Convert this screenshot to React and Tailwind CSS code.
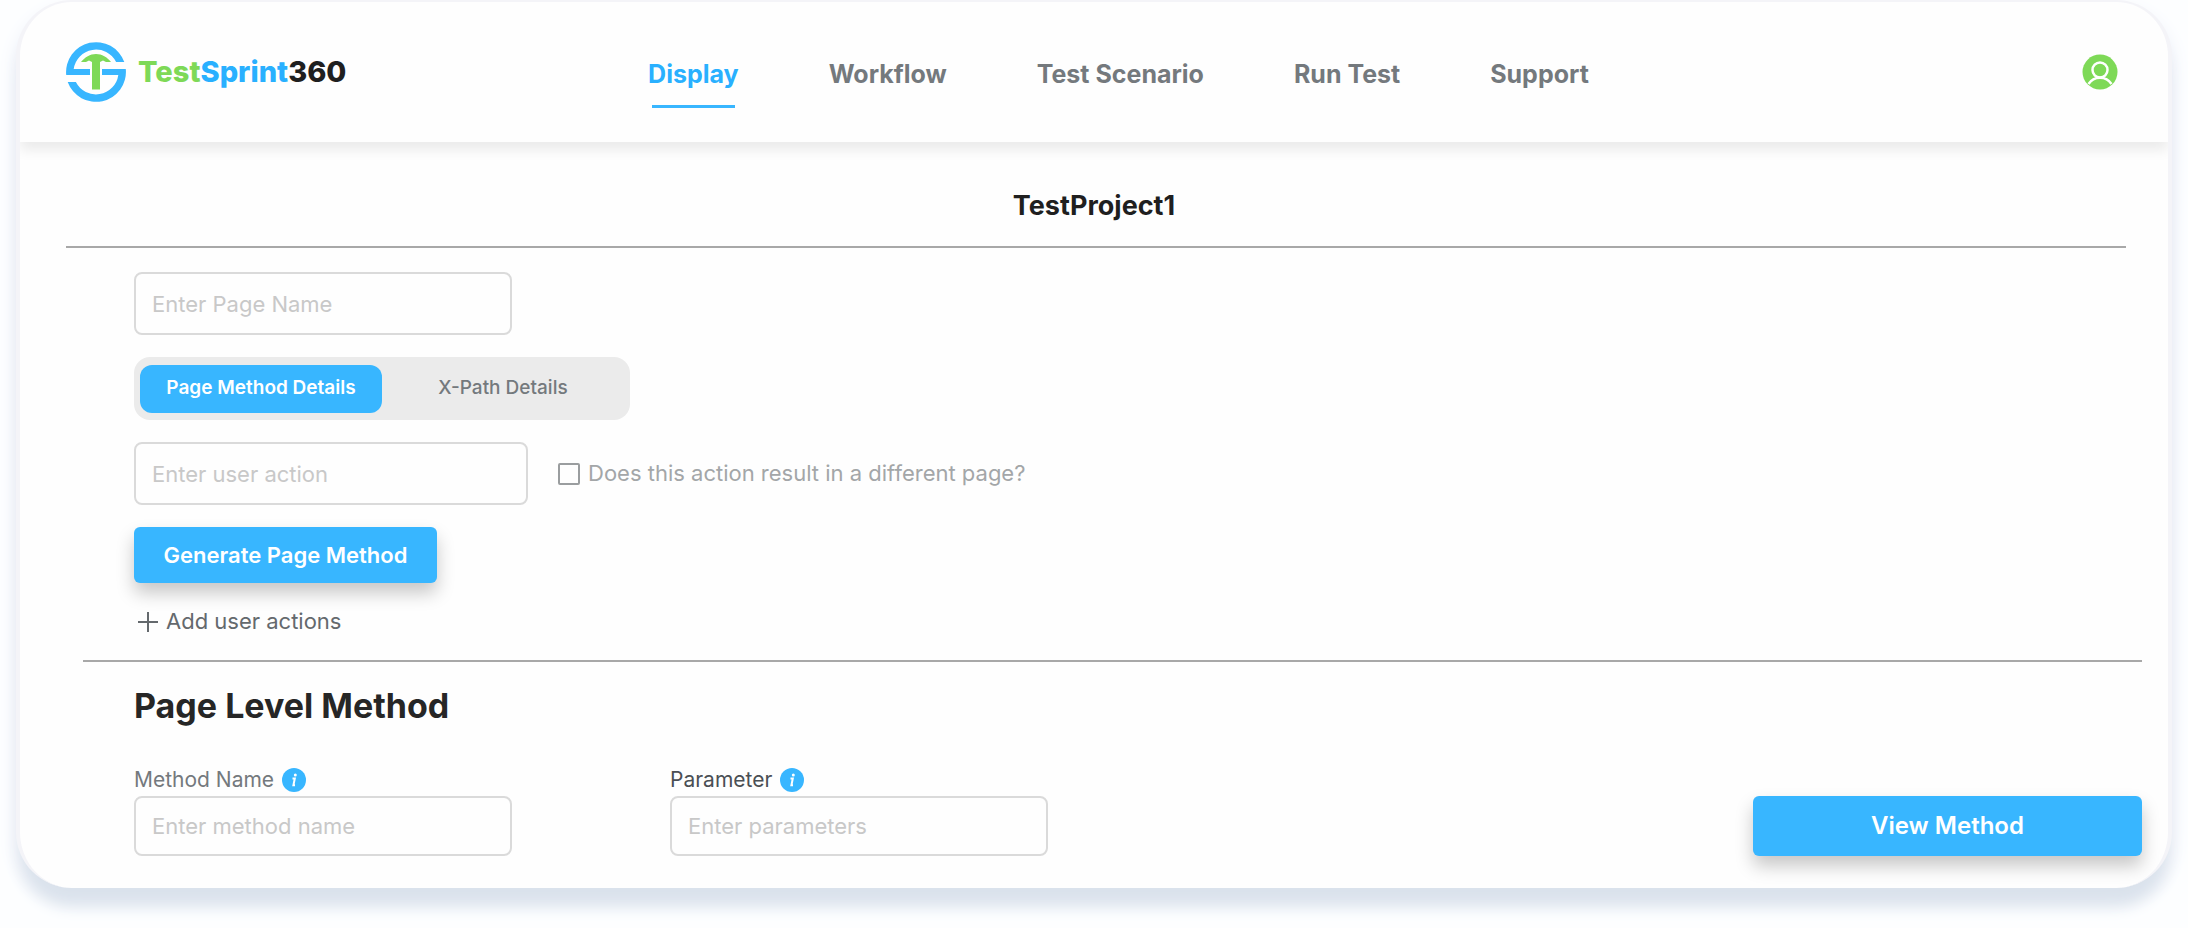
import { useState } from 'react'
import clsx from 'clsx'

const navItems = ['Display', 'Workflow', 'Test Scenario', 'Run Test', 'Support']
const tabs = ['Page Method Details', 'X-Path Details']

const inputStyles =
  'rounded-lg border-2 border-[#dadada] bg-transparent px-4 text-[22px] text-[#262626] outline-none placeholder:text-[#c8c8c8]'
const buttonStyles =
  'rounded-md bg-[#38b6ff] font-semibold text-white shadow-[0_10px_18px_rgba(0,0,0,0.22)]'

function Logo() {
  return (
    <a href="#" className="flex items-center gap-3">
      <svg viewBox="0 0 60 60" className="size-15" aria-hidden="true">
        <g fill="#38b6ff">
          <path d="M.2 33A30 30 0 0 1 58.3 20H50.1A22.5 22.5 0 0 0 7.7 27H24V33Z" />
          <path d="M59.8 27A30 30 0 0 1 1.7 40H9.9A22.5 22.5 0 0 0 52.3 33H36V27Z" />
        </g>
        <path
          fill="#7ed957"
          d="M15 20C19 15 24 12 30 12S41 15 45 20H40L37 18.5 34 20V47.5H26V20L23 18.5 20 20Z"
        />
      </svg>
      <span className="text-[29px] font-extrabold text-[#1f1f1f]">
        <span className="text-[#7ed957]">Test</span>
        <span className="text-[#29b0ff]">Sprint</span>360
      </span>
    </a>
  )
}

function UserIcon() {
  return (
    <svg viewBox="0 0 36 36" className="size-9" aria-hidden="true">
      <circle cx="18" cy="18" r="17.5" fill="#7ed957" />
      <g fill="none" stroke="#fff" strokeWidth="2.5">
        <circle cx="18" cy="16" r="7.5" />
        <path d="M6.5 30C9 26 13 23.7 18 23.7S27 26 29.5 30" />
      </g>
    </svg>
  )
}

function InfoIcon() {
  return (
    <svg viewBox="0 0 24 24" className="size-6" aria-hidden="true">
      <circle cx="12" cy="12" r="12" fill="#38b6ff" />
      <circle cx="13.3" cy="7" r="1.5" fill="#fff" />
      <path
        d="M10.5 10.5H12.8L11.4 17.2H13"
        fill="none"
        stroke="#fff"
        strokeWidth="2"
      />
    </svg>
  )
}

function Header() {
  return (
    <header className="grid h-35 grid-cols-[11fr_auto_10fr] items-center pr-[50px] pl-[46px] shadow-[0_8px_12px_rgba(0,0,0,0.08)]">
      <Logo />
      <nav className="flex gap-[90px] pt-1">
        {navItems.map((item, i) => (
          <a
            key={item}
            href="#"
            className={clsx(
              'relative text-[25px] leading-8 font-bold',
              i === 0 ? 'text-[#29b0ff]' : 'text-[#74797d]'
            )}
          >
            {item}
            {i === 0 && (
              <span className="absolute inset-x-1 -bottom-[18px] h-[3px] bg-[#38b6ff]" />
            )}
          </a>
        ))}
      </nav>
      <button type="button" aria-label="Account" className="justify-self-end">
        <UserIcon />
      </button>
    </header>
  )
}

function Field({ id, label, placeholder, className }) {
  return (
    <div className="flex w-[378px] flex-col gap-1">
      <label
        htmlFor={id}
        className={clsx(
          'flex items-center gap-2 text-[21px] leading-6',
          className
        )}
      >
        {label}
        <InfoIcon />
      </label>
      <input
        id={id}
        type="text"
        placeholder={placeholder}
        className={clsx(inputStyles, 'h-15')}
      />
    </div>
  )
}

export default function App() {
  const [tab, setTab] = useState(tabs[0])

  return (
    <div className="min-h-screen bg-[#fdfeff] px-4 pb-10 font-['Inter',sans-serif]">
      <main className="overflow-hidden rounded-[56px] border-x-4 border-t-2 border-[#f4f4f8] bg-[#fefefe] pb-8 shadow-[0_22px_16px_-4px_#dae2ec,0_10px_20px_#eceff7]">
        <Header />

        <h1 className="mt-11 text-center text-[27px] leading-10 font-bold text-[#1f1f1f]">
          TestProject1
        </h1>
        <hr className="mt-5 mr-[42px] ml-[46px] border-t-2 border-[#a8a8a8]" />

        <form className="mt-6 ml-[114px] flex flex-col items-start">
          <input
            type="text"
            aria-label="Page name"
            placeholder="Enter Page Name"
            className={clsx(inputStyles, 'h-[63px] w-[378px]')}
          />

          <div className="mt-[22px] flex h-[63px] w-[496px] items-center rounded-2xl bg-[#ebebeb] px-[6px]">
            {tabs.map((name) => (
              <button
                key={name}
                type="button"
                aria-pressed={tab === name}
                onClick={() => setTab(name)}
                className={clsx(
                  'h-12 flex-1 rounded-xl text-[19px]',
                  tab === name
                    ? 'bg-[#38b6ff] font-semibold text-white'
                    : 'font-medium text-[#74797d]'
                )}
              >
                {name}
              </button>
            ))}
          </div>

          <div className="mt-[22px] flex items-center gap-[30px]">
            <input
              type="text"
              aria-label="User action"
              placeholder="Enter user action"
              className={clsx(inputStyles, 'h-[63px] w-[394px]')}
            />
            <label className="flex items-center gap-2 text-[22px] text-[#a3a6a8]">
              <input
                type="checkbox"
                className="size-[22px] appearance-none rounded-xs border-2 border-[#9a9d9f] checked:bg-[#38b6ff]"
              />
              Does this action result in a different page?
            </label>
          </div>

          <button
            type="button"
            className={clsx(buttonStyles, 'mt-[22px] h-14 w-[303px] text-[22px]')}
          >
            Generate Page Method
          </button>

          <button
            type="button"
            className="mt-[22px] flex items-center gap-2 pl-1 text-[22px] text-[#64696d]"
          >
            <svg viewBox="0 0 20 20" className="size-5" aria-hidden="true">
              <path d="M10 0V20M0 10H20" stroke="currentColor" strokeWidth="2" />
            </svg>
            Add user actions
          </button>
        </form>

        <hr className="mt-[22px] mr-[26px] ml-[63px] border-t-2 border-[#a8a8a8]" />

        <section className="mt-6 mr-[26px] ml-[114px]">
          <h2 className="text-[34px] leading-10 font-bold text-[#262626]">
            Page Level Method
          </h2>
          <div className="mt-[42px] flex items-end">
            <Field
              id="method-name"
              label="Method Name"
              placeholder="Enter method name"
              className="text-[#74797d]"
            />
            <div className="ml-[158px]">
              <Field
                id="parameters"
                label="Parameter"
                placeholder="Enter parameters"
                className="text-[#4a4f54]"
              />
            </div>
            <button
              type="button"
              className={clsx(buttonStyles, 'ml-auto h-15 w-[389px] text-2xl')}
            >
              View Method
            </button>
          </div>
        </section>
      </main>
    </div>
  )
}
